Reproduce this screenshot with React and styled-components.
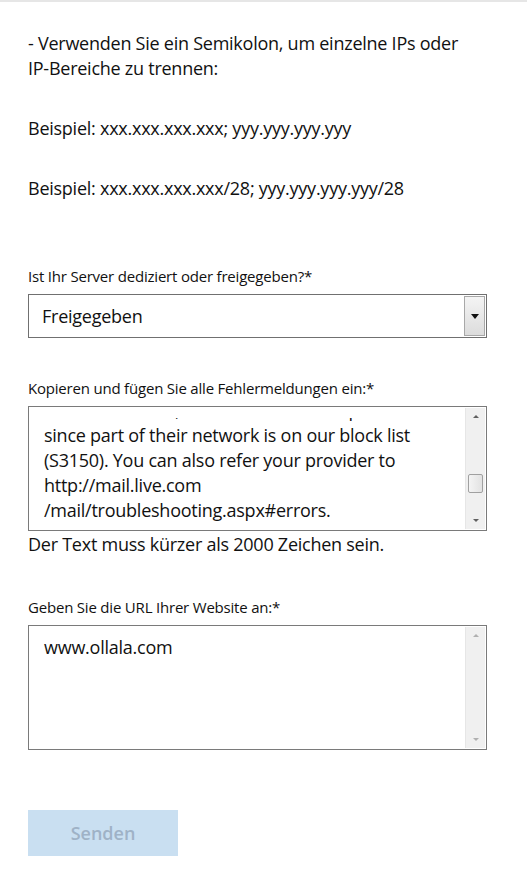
import React from "react";
import styled, { createGlobalStyle } from "styled-components";

const GlobalStyle = createGlobalStyle`
  html, body {
    margin: 0;
    padding: 0;
    background: #ffffff;
  }
  body {
    font-family: "Open Sans", "Noto Sans", "Liberation Sans", sans-serif;
    color: #111111;
  }
`;

const Page = styled.div`
  width: 527px;
  min-height: 881px;
  border-top: 2px solid #e6e6e6;
  box-sizing: border-box;
  padding: 29px 40px 24px 28px;
`;

const Para = styled.p`
  margin: 0 0 ${(p) => p.gap || 0}px;
  font-size: 18px;
  line-height: 25px;
  letter-spacing: -0.25px;
`;

const Label = styled.div`
  font-size: 15px;
  line-height: 20px;
  letter-spacing: -0.2px;
  margin: ${(p) => p.top || 0}px 0 8px;
`;

const SelectBox = styled.div`
  width: 459px;
  height: 44px;
  box-sizing: border-box;
  border: 1px solid #707070;
  display: flex;
  align-items: stretch;
`;

const SelectValue = styled.div`
  flex: 1;
  padding-left: 13px;
  display: flex;
  align-items: center;
  font-size: 18px;
  letter-spacing: -0.25px;
`;

const DropButton = styled.div`
  width: 19px;
  margin: 1px 1px 1px 0;
  border: 1px solid #a8a8a8;
  background: linear-gradient(to bottom, #f4f4f4, #dcdcdc);
  display: flex;
  align-items: center;
  justify-content: center;
`;

const Arrow = styled.div`
  width: 0;
  height: 0;
  border-left: 4px solid transparent;
  border-right: 4px solid transparent;
  border-top: 5px solid #111;
`;

const TextBox = styled.div`
  width: 459px;
  height: 125px;
  box-sizing: border-box;
  border: 1px solid #7a7a7a;
  display: flex;
`;

const TextView = styled.div`
  flex: 1;
  overflow: hidden;
  margin-top: ${(p) => p.clip}px;
  padding-left: 15px;
  font-size: 18px;
  line-height: 25px;
  letter-spacing: -0.25px;
`;

const TextInner = styled.div`
  margin-top: ${(p) => p.offset}px;
  white-space: pre-line;
`;

const ScrollBar = styled.div`
  width: 19px;
  margin: 1px 1px 1px 0;
  background: #f0f0f0;
  border-left: 1px solid #e6e6e6;
  display: flex;
  flex-direction: column;
  align-items: center;
`;

const ScrollArrow = styled.div`
  width: 0;
  height: 0;
  margin: 7px 0;
  border-left: 3px solid transparent;
  border-right: 3px solid transparent;
  ${(p) =>
    p.up
      ? `border-bottom: 3px solid ${p.dim ? "#b0b0b0" : "#606060"};`
      : `border-top: 3px solid ${p.dim ? "#b0b0b0" : "#606060"};`}
`;

const Track = styled.div`
  flex: 1;
  width: 100%;
  display: flex;
  flex-direction: column;
  align-items: center;
`;

const Thumb = styled.div`
  width: 15px;
  height: 19px;
  margin-top: ${(p) => p.top}px;
  box-sizing: border-box;
  border: 1px solid #a0a0a0;
  border-radius: 2px;
  background: linear-gradient(to right, #f4f4f4, #e2e2e2);
`;

const Hint = styled.div`
  font-size: 18px;
  line-height: 25px;
  letter-spacing: -0.25px;
  margin-top: 1px;
`;

const SubmitButton = styled.button`
  margin-top: 60px;
  width: 150px;
  height: 46px;
  border: none;
  background: #c9dff1;
  color: #9fb2c6;
  font-family: "Open Sans", "Noto Sans", sans-serif;
  font-size: 18px;
  font-weight: 600;
  padding: 0;
`;

const errorText = `blocked for now, because the sender provider
since part of their network is on our block list
(S3150). You can also refer your provider to
http://mail.live.com
/mail/troubleshooting.aspx#errors.`;

function FakeTextArea({ text, clip, offset, thumbTop, scrollable }) {
  return (
    <TextBox>
      <TextView clip={clip}>
        <TextInner offset={offset}>{text}</TextInner>
      </TextView>
      <ScrollBar>
        <ScrollArrow up dim={!scrollable} />
        <Track>{scrollable && <Thumb top={thumbTop} />}</Track>
        <ScrollArrow dim={!scrollable} />
      </ScrollBar>
    </TextBox>
  );
}

export default function App() {
  return (
    <>
      <GlobalStyle />
      <Page>
        <Para gap={35}>
          - Verwenden Sie ein Semikolon, um einzelne IPs oder
          <br />
          IP-Bereiche zu trennen:
        </Para>
        <Para gap={35}>Beispiel: xxx.xxx.xxx.xxx; yyy.yyy.yyy.yyy</Para>
        <Para>Beispiel: xxx.xxx.xxx.xxx/28; yyy.yyy.yyy.yyy/28</Para>

        <Label top={65}>Ist Ihr Server dediziert oder freigegeben?*</Label>
        <SelectBox>
          <SelectValue>Freigegeben</SelectValue>
          <DropButton>
            <Arrow />
          </DropButton>
        </SelectBox>

        <Label top={40}>Kopieren und fügen Sie alle Fehlermeldungen ein:*</Label>
        <FakeTextArea
          text={errorText}
          clip={11}
          offset={-20}
          thumbTop={49}
          scrollable
        />
        <Hint>Der Text muss kürzer als 2000 Zeichen sein.</Hint>

        <Label top={40}>Geben Sie die URL Ihrer Website an:*</Label>
        <FakeTextArea text="www.ollala.com" clip={9} offset={0} />

        <SubmitButton>Senden</SubmitButton>
      </Page>
    </>
  );
}
